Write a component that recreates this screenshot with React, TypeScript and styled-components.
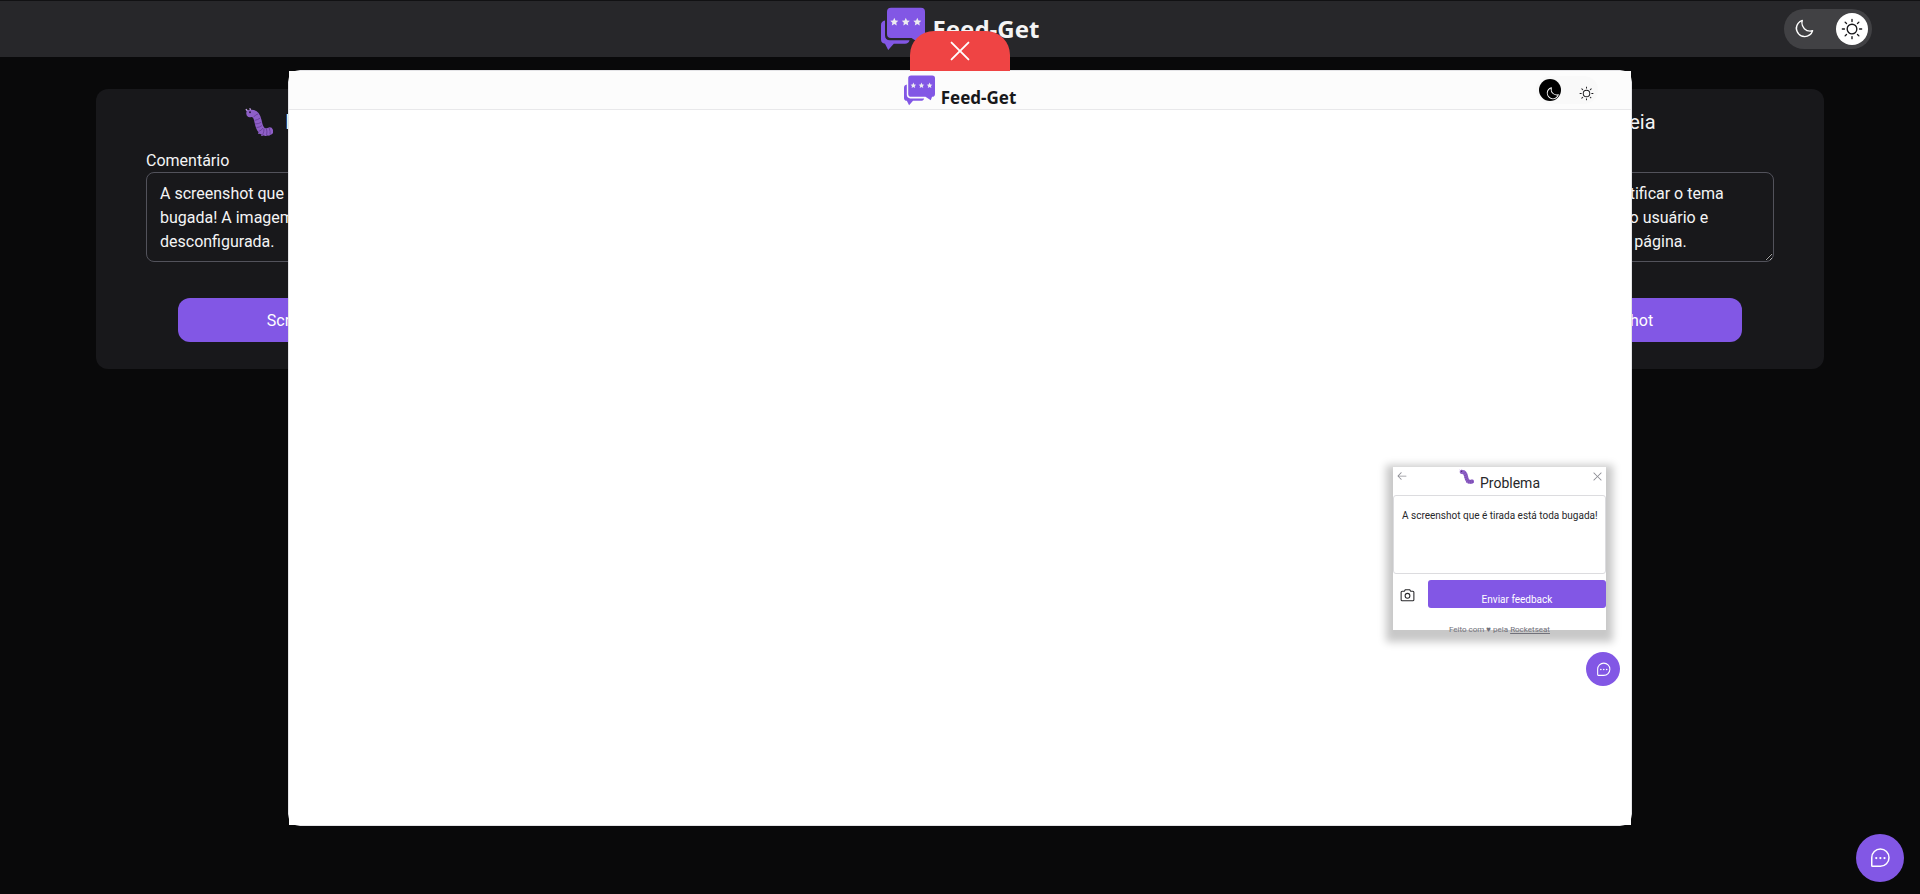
import React from "react";
import styled, { createGlobalStyle } from "styled-components";
import {
  PiArrowLeft,
  PiCamera,
  PiChatTeardropDots,
  PiLightbulb,
  PiMoon,
  PiSun,
  PiX,
} from "react-icons/pi";

const brand = "#8257e5";

const GlobalStyle = createGlobalStyle`
  *, *::before, *::after { box-sizing: border-box; }
  body {
    margin: 0;
    background: #09090a;
    color: #f4f4f5;
    font-family: Roboto, "Liberation Sans", sans-serif;
    font-size: 16px;
    line-height: 24px;
  }
  button, textarea { font: inherit; color: inherit; }
  button { border: 0; padding: 0; cursor: pointer; }
  svg { display: block; flex: none; }
`;

const Page = styled.div`
  min-height: 100vh;
  border-top: 1px solid #111113;
`;

const Header = styled.header`
  display: grid;
  grid-template-columns: 1fr auto 1fr;
  align-items: center;
  height: 56px;
  padding: 0 48px;
  background: #27272a;
`;

const Brand = styled.h1<{ $small?: boolean }>`
  grid-column: 2;
  display: flex;
  align-items: ${(p) => (p.$small ? "flex-end" : "center")};
  gap: ${(p) => (p.$small ? "6px" : "8px")};
  margin: 0;
  font-family: "Noto Sans", "Open Sans", sans-serif;
  font-size: ${(p) => (p.$small ? "17px" : "24px")};
  line-height: ${(p) => (p.$small ? "16px" : "32px")};
  font-weight: 700;
  color: ${(p) => (p.$small ? "#18181b" : "#f4f4f5")};
`;

const ThemeSwitch = styled.div<{ $small?: boolean }>`
  grid-column: 3;
  justify-self: end;
  display: flex;
  justify-content: space-between;
  padding: ${(p) => (p.$small ? "3px" : "4px")};
  width: ${(p) => (p.$small ? "62px" : "88px")};
  border-radius: 20px;
  background: ${(p) => (p.$small ? "#f9f9f9" : "#414144")};
`;

const ThemeOption = styled.button<{ $small?: boolean; $fill?: string; $ink: string }>`
  display: flex;
  align-items: ${(p) => (p.$small ? "flex-end" : "center")};
  justify-content: ${(p) => (p.$small ? "flex-end" : "center")};
  padding: ${(p) => (p.$small ? "0 1px 0 0" : "0")};
  width: ${(p) => (p.$small ? "22px" : "32px")};
  height: ${(p) => (p.$small ? "22px" : "32px")};
  border-radius: 50%;
  overflow: hidden;
  background: ${(p) => p.$fill ?? "transparent"};
  color: ${(p) => p.$ink};
`;

const Main = styled.main`
  padding: 32px 5%;
`;

const Board = styled.section`
  display: flex;
  justify-content: space-between;
  padding: 19px 50px 27px;
  border-radius: 12px;
  background: #18181b;
`;

const Feedback = styled.article`
  display: flex;
  flex-direction: column;
  width: 322px;
`;

const FeedbackTitle = styled.h2`
  display: flex;
  align-items: center;
  justify-content: center;
  gap: 12px;
  margin: 0 0 12px;
  padding-left: 2px;
  font-size: 20px;
  line-height: 28px;
  font-weight: 400;
`;

const Label = styled.label`
  padding-top: 1px;
  line-height: 23px;
`;

const Comment = styled.textarea`
  display: block;
  width: 100%;
  height: 90px;
  padding: 9px 13px 7px;
  border: 1px solid #52525b;
  border-radius: 8px;
  background: transparent;
  overflow: hidden;
  white-space: pre;
`;

const ShotButton = styled.button`
  height: 44px;
  margin: 36px 32px 0;
  padding-top: 2px;
  border-radius: 12px;
  background: ${brand};
  color: #fff;
`;

const FloatingButton = styled.button`
  position: fixed;
  right: 16px;
  bottom: 12px;
  display: grid;
  place-items: center;
  width: 48px;
  height: 48px;
  border-radius: 50%;
  background: ${brand};
  color: #fff;
`;

const Overlay = styled.div`
  position: fixed;
  inset: 0;
  display: grid;
  place-items: center;
  padding-top: 2px;
`;

const Modal = styled.div`
  position: relative;
  display: flex;
  width: 70%;
  aspect-ratio: 16 / 9;
  border: 1px solid #e4e4e7;
  border-radius: 12px;
`;

const CloseButton = styled.button`
  position: absolute;
  bottom: 100%;
  left: 50%;
  transform: translateX(-50%);
  display: grid;
  place-items: center;
  width: 100px;
  height: 40px;
  border-radius: 24px 24px 0 0;
  background: #ef4444;
  color: #fff;
`;

const Shot = styled.div`
  flex: 1;
  display: flex;
  flex-direction: column;
  background: #fff;
  color: #27272a;
`;

const ShotHeader = styled.div`
  display: grid;
  grid-template-columns: 1fr auto 1fr;
  align-items: center;
  height: 39px;
  padding: 0 33px;
  border-bottom: 1px solid #e8e8ea;
  background: #fcfcfc;
`;

const ShotBody = styled.div`
  flex: 1;
  display: flex;
  flex-direction: column;
  align-items: flex-end;
  justify-content: flex-end;
  gap: 22px;
  padding: 0 11px 139px 0;
`;

const Widget = styled.section`
  display: flex;
  flex-direction: column;
  width: 213px;
  height: 163px;
  margin-right: 14px;
  background: #fff;
  box-shadow: 0 5px 8px 7px #c8c8c8;
`;

const WidgetHeader = styled.div`
  display: flex;
  justify-content: space-between;
  height: 28px;
  padding: 2px 2px 0 3px;
  color: #8d8d94;
`;

const WidgetTitle = styled.h3`
  display: flex;
  gap: 6px;
  margin: 0;
  color: #27272a;
  font-size: 14px;
  line-height: 28px;
  font-weight: 400;
`;

const IconButton = styled.button`
  display: grid;
  place-items: center;
  height: 14px;
  background: transparent;
`;

const WidgetComment = styled.textarea`
  display: block;
  flex: none;
  width: 100%;
  height: 79px;
  padding: 12px 4px 12px 8px;
  border: 1px solid #dcdcdf;
  border-radius: 3px;
  background: transparent;
  font-size: 10px;
  line-height: 16px;
  white-space: pre;
  resize: none;
  overflow: hidden;
`;

const WidgetActions = styled.div`
  display: flex;
  align-items: center;
  gap: 12px;
  padding: 6px 0 0 6px;
`;

const SendButton = styled.button`
  flex: 1;
  height: 28px;
  padding-top: 11px;
  border-radius: 3px;
  background: ${brand};
  color: #fff;
  font-size: 10px;
  line-height: 17px;
`;

const WidgetFooter = styled.p`
  flex: none;
  margin: 16px 0 0;
  color: #71717a;
  font-size: 8px;
  line-height: 12px;
  text-align: center;

  a { color: inherit; }
`;

const WidgetTrigger = styled.button`
  display: grid;
  place-items: center;
  width: 34px;
  height: 34px;
  border-radius: 50%;
  background: ${brand};
  color: #fff;
`;

const star =
  "0,-4.2 1.2,-1.4 4,-1.2 1.9,0.7 2.5,3.5 0,2 -2.5,3.5 -1.9,0.7 -4,-1.2 -1.2,-1.4";

function Logo({ size }: { size: number }) {
  return (
    <svg width={size} height={size} viewBox="0 0 44 44" aria-hidden="true">
      <path
        fill={brand}
        d="M10 .7h30a4 4 0 0 1 4 4V27a4 4 0 0 1-4 4h-.2l-1.8 4.8L30.500 31H10a4 4 0 0 1-4-4V4.700a4 4 0 0 1 4-4Z"
      />
      <path
        fill={brand}
        d="M4 13.500C1.500 14 0 15.500 0 18v14.500c0 2.500 1.500 4 4 4.200L7.200 43l5.600-6.300H24c2.500 0 4-1.200 4.600-3.500H9c-3.200 0-5-1.800-5-5Z"
      />
      {[13.3, 24.8, 36.3].map((x) => (
        <polygon key={x} points={star} fill="#ececf0" transform={`translate(${x} 15)`} />
      ))}
    </svg>
  );
}

function Bug({ size }: { size: number }) {
  return (
    <svg width={size} height={size} viewBox="0 0 28 28" aria-hidden="true">
      <path d="M2.500 3 1.200 1.500M5.500 2 5 .6" stroke="#c4a5e8" strokeWidth="1.200" strokeLinecap="round" />
      <path
        d="M5 5.500c5-.8 7 2.500 8 7.500 1 5.500 3 11 7.500 11 2 0 3-.4 4-.8"
        fill="none"
        stroke="#8e5fc7"
        strokeWidth="7.400"
        strokeLinecap="round"
      />
      <path
        d="M8.500 9.200q2-2.800 4.500-3.200M9.500 12.400q3-.4 5.800-2.400M10 16q3.500 0 6.300-1.700M11.500 19.500q3 0 5.500-2M13.500 23.400q3-.7 4.500-3.400M17.600 27q1.500-3 1.400-6.500M21.600 27.200q.8-3.200-.2-6.800M25 26.500q.6-3-.8-6.500"
        fill="none"
        stroke="#6d429f"
        strokeWidth="1"
      />
      <path d="M14 24.500v1.500M17 27v1M20.500 27v1M24 26.500v1" stroke="#8e5fc7" strokeWidth="1.500" />
      <circle cx="5" cy="4.300" r="1" fill="#2c1a42" />
    </svg>
  );
}

export default function App() {
  return (
    <>
      <GlobalStyle />
      <Page>
        <Header>
          <Brand>
            <Logo size={44} />
            Feed-Get
          </Brand>
          <ThemeSwitch>
            <ThemeOption $ink="#fff" aria-label="Tema escuro">
              <PiMoon size={22} />
            </ThemeOption>
            <ThemeOption $fill="#fff" $ink="#18181b" aria-label="Tema claro">
              <PiSun size={22} />
            </ThemeOption>
          </ThemeSwitch>
        </Header>
        <Main>
          <Board>
            <Feedback>
              <FeedbackTitle>
                <Bug size={28} />
                Problema
              </FeedbackTitle>
              <Label htmlFor="problem">Comentário</Label>
              <Comment
                id="problem"
                defaultValue={"A screenshot que é tirada está toda\nbugada! A imagem fica toda\ndesconfigurada."}
              />
              <ShotButton>Screenshot</ShotButton>
            </Feedback>
            <Feedback>
              <FeedbackTitle>
                <PiLightbulb size={28} />
                Ideia
              </FeedbackTitle>
              <Label htmlFor="idea">Comentário</Label>
              <Comment
                id="idea"
                defaultValue={"O sistema poderia identificar o tema\npadrão do navegador do usuário e\njá aplicar ele em toda a página."}
              />
              <ShotButton>Screenshot</ShotButton>
            </Feedback>
          </Board>
        </Main>
      </Page>

      <FloatingButton aria-label="Enviar feedback">
        <PiChatTeardropDots size={24} />
      </FloatingButton>

      <Overlay>
        <Modal role="dialog" aria-label="Screenshot">
          <CloseButton aria-label="Fechar">
            <PiX size={30} />
          </CloseButton>
          <Shot>
            <ShotHeader>
              <Brand as="h2" $small>
                <Logo size={31} />
                Feed-Get
              </Brand>
              <ThemeSwitch $small>
                <ThemeOption $small $fill="#000" $ink="#fff" aria-label="Tema escuro">
                  <PiMoon size={15} />
                </ThemeOption>
                <ThemeOption $small $ink="#18181b" aria-label="Tema claro">
                  <PiSun size={15} />
                </ThemeOption>
              </ThemeSwitch>
            </ShotHeader>
            <ShotBody>
              <Widget>
                <WidgetHeader>
                  <IconButton aria-label="Voltar">
                    <PiArrowLeft size={12} />
                  </IconButton>
                  <WidgetTitle>
                    <Bug size={15} />
                    Problema
                  </WidgetTitle>
                  <IconButton aria-label="Fechar formulário">
                    <PiX size={13} />
                  </IconButton>
                </WidgetHeader>
                <WidgetComment
                  aria-label="Comentário"
                  defaultValue="A screenshot que é tirada está toda bugada!"
                />
                <WidgetActions>
                  <IconButton aria-label="Tirar screenshot">
                    <PiCamera size={17} />
                  </IconButton>
                  <SendButton>Enviar feedback</SendButton>
                </WidgetActions>
                <WidgetFooter>
                  Feito com ♥ pela <a href="#rocketseat">Rocketseat</a>
                </WidgetFooter>
              </Widget>
              <WidgetTrigger aria-label="Abrir formulário">
                <PiChatTeardropDots size={17} />
              </WidgetTrigger>
            </ShotBody>
          </Shot>
        </Modal>
      </Overlay>
    </>
  );
}
